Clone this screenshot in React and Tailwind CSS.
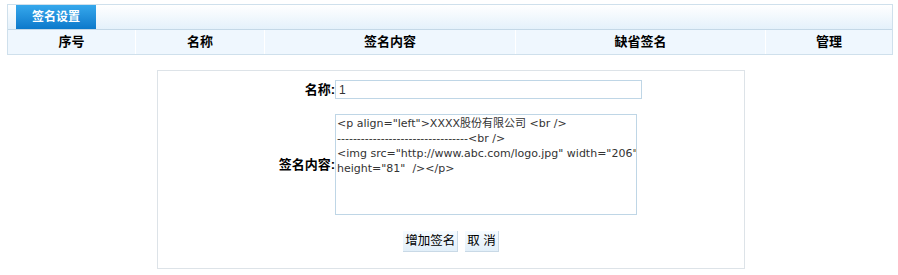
export default function App() {
  const cols = [
    { title: "序号", w: "w-[128px]" },
    { title: "名称", w: "w-[129px]" },
    { title: "签名内容", w: "w-[251px]" },
    { title: "缺省签名", w: "w-[250px]" },
    { title: "管理", w: "flex-1" },
  ];

  const content =
    '<p align="left">XXXX股份有限公司 <br />\n---------------------------------<br />\n<img src="http://www.abc.com/logo.jpg" width="206"\nheight="81"  /></p>';

  return (
    <div
      className="w-[898px] h-[275px] bg-white pt-[4px] px-[7px] text-[12px] text-[#222]"
      style={{ fontFamily: '"Liberation Sans", "Noto Sans CJK SC", sans-serif' }}
    >
      {/* 标题栏 */}
      <div className="border border-[#cfe0ec] w-[886px]">
        <div className="h-[24px] flex items-end pl-[8px] bg-gradient-to-b from-white to-[#e4f1fb]">
          <div className="w-[80px] h-[24px] flex items-center justify-center bg-gradient-to-b from-[#35a8ec] to-[#0a79cb] text-white font-bold text-[12px]">
            签名设置
          </div>
        </div>

        {/* 表头 */}
        <div className="flex h-[25px] border-t border-[#c4d8e7] bg-[#eff7fe] font-bold text-[13px] text-black">
          {cols.map((c, i) => (
            <div
              key={i}
              className={`${c.w} flex items-center justify-center ${i < cols.length - 1 ? "border-r border-white" : ""}`}
            >
              {c.title}
            </div>
          ))}
        </div>
      </div>

      {/* 表单 */}
      <div className="mt-[15px] ml-[150px] w-[588px] h-[199px] border border-[#dde3e8] pt-[9px]">
        <div className="flex items-center h-[19px]">
          <div className="w-[177px] text-right font-bold text-[13px] text-black">名称:</div>
          <input
            defaultValue="1"
            className="w-[307px] h-[19px] border border-[#bfd6e6] px-[3px] text-[12px] text-[#333] outline-none"
          />
        </div>

        <div className="flex items-center mt-[15px]">
          <div className="w-[177px] text-right font-bold text-[13px] text-black">签名内容:</div>
          <textarea
            defaultValue={content}
            wrap="off"
            className="w-[302px] h-[101px] border border-[#bfd6e6] px-[1px] py-[1px] leading-[15px] text-[#333] resize-none overflow-hidden outline-none"
            style={{ fontFamily: '"DejaVu Sans", "Noto Sans CJK SC", sans-serif', fontSize: "11px" }}
          />
        </div>

        <div className="flex justify-center gap-[7px] mt-[16px]">
          <button className="h-[21px] px-[2px] bg-gradient-to-b from-[#f6fbff] to-[#e2eff9] border-r border-b border-[#c9d9e6] text-[12.5px] text-black">
            增加签名
          </button>
          <button className="h-[21px] px-[2px] bg-gradient-to-b from-[#f6fbff] to-[#e2eff9] border-r border-b border-[#c9d9e6] text-[12.5px] text-black">
            取 消
          </button>
        </div>
      </div>
    </div>
  );
}
